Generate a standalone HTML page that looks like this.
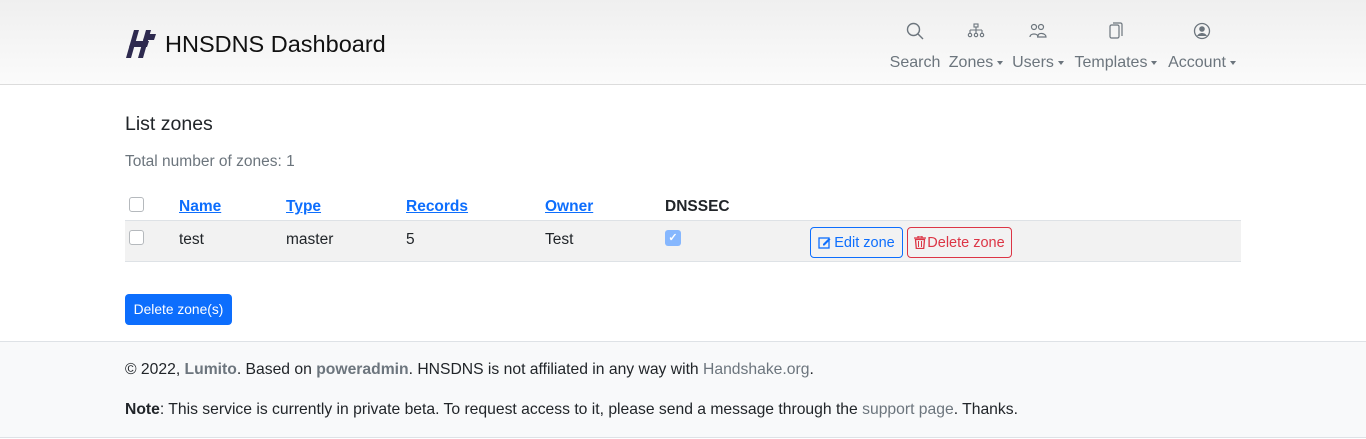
<!DOCTYPE html>
<html><head><meta charset="utf-8"><style>
*{box-sizing:border-box;margin:0;padding:0}
body{width:1366px;height:439px;overflow:hidden;font-family:"Liberation Sans",sans-serif;color:#212529;background:#fff;font-size:15.5px;position:relative}
.hdr{position:absolute;left:0;top:0;width:1366px;height:85px;background:linear-gradient(#efefef,#fbfbfb);border-bottom:1px solid #dcdcdc}
.brand{position:absolute;left:125px;top:29px;font-size:23.5px;color:#111;display:flex;align-items:center}
.brand svg{margin-right:8px}
.nav{position:absolute;top:18px;font-size:16px;color:#6c757d;text-align:center}
.nav .ic{height:26px;display:flex;justify-content:center;align-items:center}
.nav .t{margin-top:10px;white-space:nowrap}
.car{display:inline-block;border-top:4px solid #6c757d;border-left:3.5px solid transparent;border-right:3.5px solid transparent;vertical-align:middle;margin-left:4px}
.a{position:absolute}
.lnk{color:#0d6efd;font-weight:bold;text-decoration:underline;font-size:15.5px}
.cb{width:15px;height:15px;border:1px solid #b5b9bd;border-radius:3px;background:#fff}
.btn{position:absolute;height:31px;border-radius:4px;font-size:14px;display:flex;align-items:center;justify-content:center;padding:0;white-space:nowrap}
.foot{position:absolute;left:0;top:341px;width:1366px;height:97px;background:#f8f9fa;border-top:1px solid #dee2e6;border-bottom:1px solid #dee2e6;font-size:15.7px}
.foot b{color:#6c757d}.foot .g{color:#6c757d}
</style></head><body>
<div class="hdr">
 <div class="brand"><svg width="32" height="30" viewBox="0 0 32 30"><path d="M9 1 L14 1 L6 29 L1 29 Z M21 1 L26 1 L18 29 L13 29 Z M6 12 L24 12 L22 18 L4 18 Z M20 5 L31 5 L29 11 L18 11 Z" fill="#2e2a4f"/></svg>HNSDNS Dashboard</div>
 <div class="nav" style="left:889px;width:52px"><div class="ic"><svg width="18" height="18" viewBox="0 0 18 18" fill="none" stroke="#6c757d" stroke-width="1.4"><circle cx="7.5" cy="7.5" r="6"/><path d="M12 12l5 5"/></svg></div><div class="t">Search</div></div>
 <div class="nav" style="left:945px;width:62px"><div class="ic"><svg width="18" height="16" viewBox="0 0 18 16" fill="none" stroke="#6c757d" stroke-width="1.1"><rect x="7" y="1" width="4" height="3"/><path d="M9 4v3M3 7h12M3 7v3M9 7v3M15 7v3"/><circle cx="3" cy="12" r="1.7"/><circle cx="9" cy="12" r="1.7"/><circle cx="15" cy="12" r="1.7"/></svg></div><div class="t">Zones<span class="car"></span></div></div>
 <div class="nav" style="left:1010px;width:56px"><div class="ic"><svg width="18" height="16" viewBox="0 0 18 16" fill="none" stroke="#6c757d" stroke-width="1.2"><circle cx="5" cy="4" r="2.5"/><circle cx="12" cy="4" r="2.5"/><path d="M1 14c0-4 8-4 8 0M8 14h9c0-4-8-5-8-1"/></svg></div><div class="t">Users<span class="car"></span></div></div>
 <div class="nav" style="left:1070px;width:92px"><div class="ic"><svg width="14" height="18" viewBox="0 0 14 18" fill="none" stroke="#6c757d" stroke-width="1.2"><rect x="1" y="3" width="9" height="13" rx="1.5"/><path d="M4 1h7.5a1.5 1.5 0 0 1 1.5 1.5V14"/></svg></div><div class="t">Templates<span class="car"></span></div></div>
 <div class="nav" style="left:1165px;width:74px"><div class="ic"><svg width="18" height="18" viewBox="0 0 18 18"><circle cx="9" cy="9" r="7.5" fill="none" stroke="#6c757d" stroke-width="1.3"/><circle cx="9" cy="7" r="2.8" fill="#6c757d"/><path d="M4 14c2-4 8-4 10 0" fill="#6c757d"/></svg></div><div class="t">Account<span class="car"></span></div></div>
</div>
<div class="a" style="left:125px;top:113px;font-size:19.5px">List zones</div>
<div class="a" style="left:125px;top:153px;color:#6c757d;font-size:15.5px">Total number of zones: 1</div>
<div class="a cb" style="left:129px;top:197px"></div>
<div class="a lnk" style="left:179px;top:198px">Name</div>
<div class="a lnk" style="left:286px;top:198px">Type</div>
<div class="a lnk" style="left:406px;top:198px">Records</div>
<div class="a lnk" style="left:545px;top:198px">Owner</div>
<div class="a" style="left:665px;top:198px;font-weight:bold">DNSSEC</div>
<div class="a" style="left:125px;top:220px;width:1116px;height:42px;background:#f2f2f2;border-top:1px solid #dee2e6;border-bottom:1px solid #dee2e6"></div>
<div class="a cb" style="left:129px;top:230px"></div>
<div class="a" style="left:179px;top:231px">test</div>
<div class="a" style="left:286px;top:231px">master</div>
<div class="a" style="left:406px;top:231px">5</div>
<div class="a" style="left:545px;top:231px">Test</div>
<div class="a" style="left:665px;top:230px;width:16px;height:16px;border-radius:3px;background:#86b7fe;color:#fff;font-size:11px;text-align:center;line-height:16px;font-weight:bold">✓</div>
<div class="btn" style="left:810px;top:227px;width:93px;border:1px solid #0d6efd;color:#0d6efd;font-size:14.5px"><svg width="13" height="13" viewBox="0 0 13 13" style="margin-right:3px"><rect x="1" y="2" width="10" height="10" fill="none" stroke="#0d6efd" stroke-width="1.3"/><path d="M5 8l6-6 1.5 1.5-6 6H5z" fill="#0d6efd"/></svg>Edit zone</div>
<div class="btn" style="left:907px;top:227px;width:105px;border:1px solid #dc3545;color:#dc3545;font-size:14.5px"><svg width="12" height="13" viewBox="0 0 12 13" style="margin-right:1px"><path d="M0 2h12M4 2V0h4v2M1.5 3.5h9l-.8 9H2.3z" fill="none" stroke="#dc3545" stroke-width="1.3"/><path d="M4.5 5v6M7.5 5v6" stroke="#dc3545"/></svg>Delete zone</div>
<div class="btn" style="left:125px;top:294px;width:107px;background:#0d6efd;color:#fff;font-size:13.8px">Delete zone(s)</div>
<div class="foot">
 <div class="a" style="left:125px;top:19px">© 2022, <b>Lumito</b>. Based on <b>poweradmin</b>. HNSDNS is not affiliated in any way with <span class="g">Handshake.org</span>.</div>
 <div class="a" style="left:125px;top:59px"><span style="font-weight:bold">Note</span>: This service is currently in private beta. To request access to it, please send a message through the <span class="g">support page</span>. Thanks.</div>
</div>
</body></html>
